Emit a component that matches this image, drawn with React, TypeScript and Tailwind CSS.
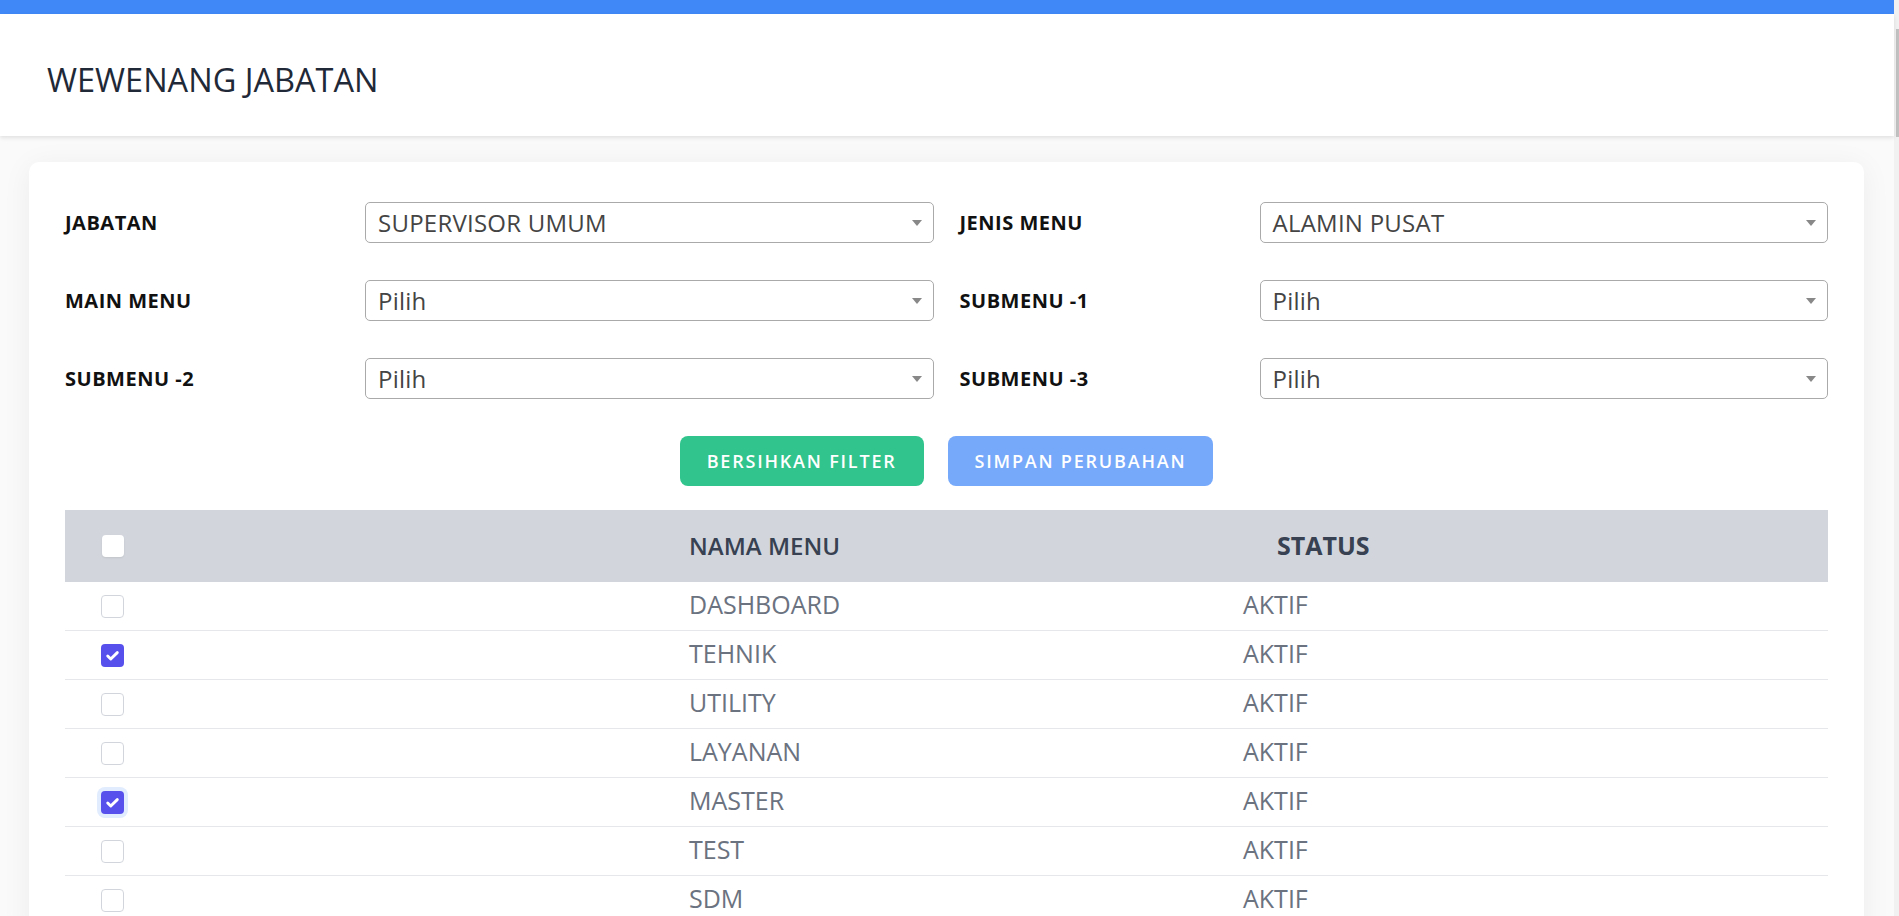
import React from "react";

function Arrow() {
  return (
    <svg width="10" height="6" viewBox="0 0 10 6" className="shrink-0">
      <polygon points="0,0 10,0 5,6" fill="#888888" />
    </svg>
  );
}

function Select({ value }: { value: string }) {
  return (
    <div className="flex h-[41px] items-center justify-between rounded-[5px] border border-[#aaaaaa] bg-white pl-[12px] pr-[11px]">
      <span className="text-[24px] leading-none tracking-[0.01em] text-[#444444]">{value}</span>
      <Arrow />
    </div>
  );
}

function Field({ label, value }: { label: string; value: string }) {
  return (
    <div className="grid grid-cols-[300px_1fr] items-center">
      <span className="text-[20px] font-bold leading-none tracking-[0.025em] text-[#111111]">{label}</span>
      <Select value={value} />
    </div>
  );
}

function Check({ checked, focus, header }: { checked?: boolean; focus?: boolean; header?: boolean }) {
  if (checked) {
    return (
      <div
        className={
          "flex h-[23px] w-[23px] items-center justify-center rounded-[4px] bg-[#5850ec] " +
          (focus ? "ring-[4px] ring-[#e1ecfe]" : "")
        }
      >
        <svg width="23" height="23" viewBox="0 0 24 24" fill="none">
          <path d="M7 12.5l3.2 3.2L17 9" stroke="white" strokeWidth="3" strokeLinecap="round" strokeLinejoin="round" />
        </svg>
      </div>
    );
  }
  if (header) {
    return <div className="h-[22px] w-[22px] rounded-[4px] bg-white shadow-[0_1px_2px_rgba(0,0,0,0.08)]" />;
  }
  return <div className="h-[23px] w-[23px] rounded-[4px] border border-[#d2d6dc] bg-white" />;
}

const rows: { name: string; checked?: boolean; focus?: boolean }[] = [
  { name: "DASHBOARD" },
  { name: "TEHNIK", checked: true },
  { name: "UTILITY" },
  { name: "LAYANAN" },
  { name: "MASTER", checked: true, focus: true },
  { name: "TEST" },
  { name: "SDM" },
];

export default function App() {
  return (
    <div className="flex h-screen w-full overflow-hidden bg-[#fafafa] font-['Open_Sans',sans-serif]">
      <div className="flex min-w-0 flex-1 flex-col">
        <div className="h-[14px] shrink-0 bg-[#4088f8]" />
        <header className="relative z-10 flex h-[122px] shrink-0 items-center bg-white pl-[47px] pt-[10px] shadow-[0_2px_4px_rgba(0,0,0,0.1)]">
          <h1 className="text-[32.5px] font-normal leading-none text-[#1f2937]">WEWENANG JABATAN</h1>
        </header>
        <main className="min-h-0 flex-1 overflow-hidden pl-[29px] pr-[30px] pt-[26px]">
          <div className="rounded-[10px] bg-white px-[36px] pt-[40px] pb-[40px] shadow-[0_4px_30px_rgba(0,0,0,0.06)]">
            <div className="grid grid-cols-2 gap-x-[26px] gap-y-[37px]">
              <Field label="JABATAN" value="SUPERVISOR UMUM" />
              <Field label="JENIS MENU" value="ALAMIN PUSAT" />
              <Field label="MAIN MENU" value="Pilih" />
              <Field label="SUBMENU -1" value="Pilih" />
              <Field label="SUBMENU -2" value="Pilih" />
              <Field label="SUBMENU -3" value="Pilih" />
            </div>
            <div className="mt-[37px] flex justify-center gap-[24px]">
              <button className="h-[50px] rounded-[8px] bg-[#31c48d] px-[27px] text-[18px] font-semibold tracking-[0.1em] text-white">
                BERSIHKAN FILTER
              </button>
              <button className="h-[50px] rounded-[8px] bg-[#76a9fa] px-[27px] text-[18px] font-semibold tracking-[0.1em] text-white">
                SIMPAN PERUBAHAN
              </button>
            </div>
            <div className="mt-[24px]">
              <div className="flex h-[72px] items-center bg-[#d2d6dc]">
                <div className="w-[624px] pl-[37px]">
                  <Check header />
                </div>
                <div className="w-[588px] text-[24px] font-semibold text-[#374151]">NAMA MENU</div>
                <div className="text-[25px] font-bold text-[#374151]">STATUS</div>
              </div>
              {rows.map((r) => (
                <div key={r.name} className="flex h-[49px] items-center border-b border-[#e5e7eb]">
                  <div className="w-[624px] pl-[36px]">
                    <Check checked={r.checked} focus={r.focus} />
                  </div>
                  <div className="w-[554px] pb-[4px] text-[25px] leading-none text-[#6b7280]">{r.name}</div>
                  <div className="pb-[4px] text-[25px] leading-none text-[#6b7280]">AKTIF</div>
                </div>
              ))}
            </div>
          </div>
        </main>
      </div>
      <div className="relative w-[5px] shrink-0 bg-[#f1f1f1]">
        <div className="absolute left-[2px] top-[29px] h-[108px] w-[3px] bg-[#c1c1c1]" />
      </div>
    </div>
  );
}
